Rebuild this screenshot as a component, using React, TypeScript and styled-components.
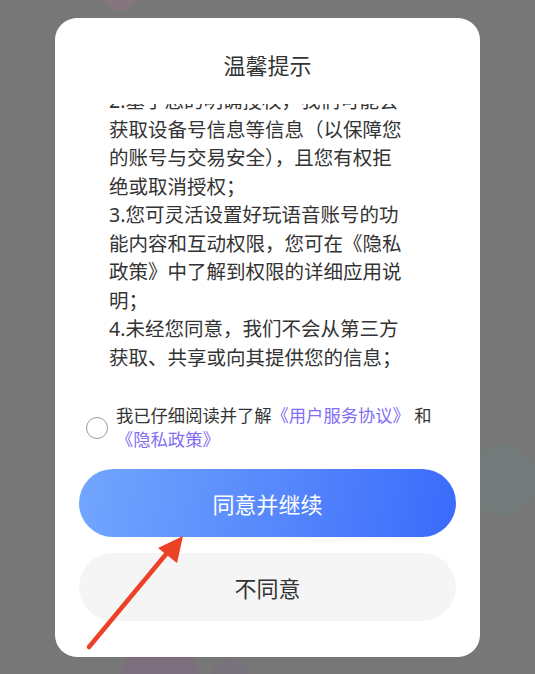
import { useEffect, useRef } from 'react'
import styled, { createGlobalStyle } from 'styled-components'

const GlobalStyle = createGlobalStyle`
	* {
		box-sizing: border-box;
	}
	html,
	body {
		margin: 0;
		padding: 0;
	}
	body {
		font-family: 'Noto Sans', 'Noto Sans CJK SC', sans-serif;
		background: #777777;
	}
`

const PRIVACY_LINES = [
	'欢迎使用好玩语音！我们依据最新的法律法规要求，制定了《隐私政策》，特向您说明如下：',
	'1.为向您提供语音互动相关基本功能，我们会收集、使用必要的信息；',
	'2.基于您的明确授权，我们可能会获取设备号信息等信息（以保障您的账号与交易安全），且您有权拒绝或取消授权；',
	'3.您可灵活设置好玩语音账号的功能内容和互动权限，您可在《隐私政策》中了解到权限的详细应用说明；',
	'4.未经您同意，我们不会从第三方获取、共享或向其提供您的信息；'
]

const App = () => {
	const scrollRef = useRef<HTMLDivElement>(null)

	useEffect(() => {
		// the dialog is shown scrolled down to the end of the notice
		if (scrollRef.current) {
			scrollRef.current.scrollTop = scrollRef.current.scrollHeight
		}
	}, [])

	return (
		<>
			<GlobalStyle />
			<S.Screen>
				<S.Blob $left={100} $top={-30} $size={40} $color="#a6728a" $opacity={0.35} />
				<S.Blob $left={468} $top={445} $size={70} $color="#5e8a88" $opacity={0.18} />
				<S.Blob $left={120} $top={640} $size={80} $color="#8a5a8c" $opacity={0.3} />
				<S.Blob $left={210} $top={658} $size={40} $color="#7a6a80" $opacity={0.3} />

				<S.Dialog>
					<S.Title>温馨提示</S.Title>
					<S.NoticeScroll ref={scrollRef}>
						{PRIVACY_LINES.map((line, idx) => (
							<S.NoticeText key={idx}>{line}</S.NoticeText>
						))}
					</S.NoticeScroll>

					<S.AgreeRow>
						<S.CheckCircle />
						<S.AgreeText>
							我已仔细阅读并了解<S.Link>《用户服务协议》</S.Link> 和
							<S.Link>《隐私政策》</S.Link>
						</S.AgreeText>
					</S.AgreeRow>

					<S.ButtonStack>
						<S.ActionButton $primary>同意并继续</S.ActionButton>
						<S.ActionButton>不同意</S.ActionButton>
					</S.ButtonStack>
				</S.Dialog>

				<S.Arrow viewBox="0 0 535 674" aria-hidden>
					<line x1="89" y1="647" x2="172" y2="547" stroke="#ea4127" strokeWidth="4.5" strokeLinecap="round" />
					<polygon points="183,536 177,563 158,548" fill="#ea4127" />
				</S.Arrow>
			</S.Screen>
		</>
	)
}

export default App

const Screen = styled.div`
	position: relative;
	width: 535px;
	height: 674px;
	overflow: hidden;
	background: #777777;
	padding-top: 18px;
`

const Blob = styled.div<{ $left: number; $top: number; $size: number; $color: string; $opacity: number }>`
	position: absolute;
	left: ${p => p.$left}px;
	top: ${p => p.$top}px;
	width: ${p => p.$size}px;
	height: ${p => p.$size}px;
	border-radius: 50%;
	background: ${p => p.$color};
	opacity: ${p => p.$opacity};
`

const Dialog = styled.section`
	position: relative;
	width: 425px;
	height: 639px;
	margin-left: 55px;

	display: flex;
	flex-direction: column;

	background: #ffffff;
	border-radius: 22px;
	padding: 32px 24px 36px;
`

const Title = styled.h2`
	margin: 0;
	text-align: center;
	font-size: 22px;
	line-height: 30px;
	font-weight: 400;
	color: #333333;
`

const NoticeScroll = styled.div`
	margin: 24px 0 0 30px;
	width: 302px;
	height: 268px;

	overflow-y: auto;
	scrollbar-width: none;
	&::-webkit-scrollbar {
		display: none;
	}
`

const NoticeText = styled.p`
	margin: 0;
	font-size: 19.5px;
	line-height: 28.5px;
	color: #333333;
	word-break: break-all;
`

const AgreeRow = styled.label`
	display: flex;
	align-items: center;
	gap: 8px;
	margin: 32px 0 0 7px;
`

const CheckCircle = styled.span`
	flex: none;
	width: 22px;
	height: 22px;
	border-radius: 50%;
	border: 1.5px solid #9a9a9a;
	background: #ffffff;
`

const AgreeText = styled.p`
	margin: 0;
	width: 322px;
	font-size: 17.3px;
	line-height: 24px;
	color: #333333;
`

const Link = styled.span`
	color: #7f6ef4;
`

const ButtonStack = styled.div`
	display: flex;
	flex-direction: column;
	gap: 16px;
	margin-top: 17px;
`

const ActionButton = styled.button<{ $primary?: boolean }>`
	height: 68px;
	width: 100%;
	border: none;
	border-radius: 34px;

	font-family: inherit;
	font-size: 22px;
	color: ${p => (p.$primary ? '#ffffff' : '#333333')};
	background: ${p => (p.$primary ? 'linear-gradient(100deg, #72a6fe 0%, #5b8cfc 45%, #3a6afb 100%)' : '#f5f5f5')};
	cursor: pointer;
`

const Arrow = styled.svg`
	position: absolute;
	left: 0;
	top: 0;
	width: 535px;
	height: 674px;
	pointer-events: none;
`

const S = {
	Screen,
	Blob,
	Dialog,
	Title,
	NoticeScroll,
	NoticeText,
	AgreeRow,
	CheckCircle,
	AgreeText,
	Link,
	ButtonStack,
	ActionButton,
	Arrow
}
